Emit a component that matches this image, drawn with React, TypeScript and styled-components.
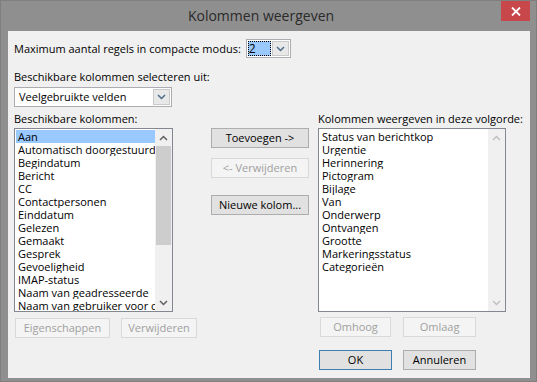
import React from 'react';
import styled, { createGlobalStyle } from 'styled-components';

const Global = createGlobalStyle`
  html, body { margin: 0; padding: 0; background: #8e8e8e; }
  body { font-family: "Open Sans", "Noto Sans", sans-serif; }
`;

const Window = styled.div`
  width: 537px;
  height: 382px;
  box-sizing: border-box;
  background: #8f8f8f;
  border: 1px solid #7f7f7f;
  display: flex;
  flex-direction: column;
  padding: 0 6px 3px 7px;
`;

const TitleBar = styled.div`
  height: 30px;
  display: flex;
  flex-shrink: 0;
`;

const Title = styled.div`
  flex: 1;
  text-align: center;
  padding-left: 13px;
  font-size: 14px;
  line-height: 30px;
  color: #2a2a2a;
`;

const CloseButton = styled.div`
  width: 29px;
  height: 20px;
  background: #c7474b;
  display: flex;
  align-items: center;
  justify-content: center;
`;

const Client = styled.div`
  flex: 1;
  background: #f0f0f0;
  display: flex;
  flex-direction: column;
  padding: 0 6px;
  font-size: 11px;
  color: #000;
`;

const TopRow = styled.div`
  margin-top: 8px;
  height: 19px;
  display: flex;
  align-items: center;
  gap: 5px;
`;

const Label = styled.div<{ $mt?: number }>`
  line-height: 15px;
  white-space: nowrap;
  margin-top: ${(p) => p.$mt ?? 0}px;
`;

const Combo = styled.div<{ $w: number; $h: number; $mt?: number }>`
  width: ${(p) => p.$w}px;
  height: ${(p) => p.$h}px;
  margin-top: ${(p) => p.$mt ?? 0}px;
  box-sizing: border-box;
  border: 1px solid #abadb3;
  background: #fff;
  display: flex;
  padding: 1px;
  flex-shrink: 0;
`;

const ComboText = styled.div<{ $selected?: boolean }>`
  flex: 1;
  line-height: 15px;
  padding-left: ${(p) => (p.$selected ? 1 : 3)}px;
  background: ${(p) => (p.$selected ? '#99c9ff' : 'transparent')};
  outline: ${(p) => (p.$selected ? '1px dotted #000' : 'none')};
  outline-offset: -1px;
  margin-right: 1px;
  font-size: ${(p) => (p.$selected ? 12 : 11)}px;
`;

const ComboButton = styled.div`
  width: 17px;
  box-sizing: border-box;
  border: 1px solid #c9c9c9;
  background: #e8e8e8;
  display: flex;
  align-items: center;
  justify-content: center;
`;

const Columns = styled.div`
  margin-top: 4px;
  display: grid;
  grid-template-columns: 159px 98px 159px;
  column-gap: 38px;
  align-items: start;
`;

const LeftCol = styled.div`
  display: flex;
  flex-direction: column;
`;

const MidCol = styled.div`
  display: flex;
  flex-direction: column;
  padding-top: 17px;
`;

const RightCol = styled.div`
  display: flex;
  flex-direction: column;
  margin-left: -29px;
`;

const ListBox = styled.div`
  margin-top: 2px;
  height: 184px;
  box-sizing: border-box;
  border: 1px solid #828790;
  background: #fff;
  display: flex;
  overflow: hidden;
`;

const Items = styled.div`
  flex: 1;
  min-width: 0;
  padding: 1px 0 0 1px;
`;

const Item = styled.div<{ $selected?: boolean }>`
  height: 13px;
  line-height: 13px;
  padding-left: 2px;
  white-space: nowrap;
  overflow: hidden;
  background: ${(p) => (p.$selected ? '#99c9ff' : 'transparent')};
`;

const ScrollBar = styled.div`
  width: 17px;
  display: flex;
  flex-direction: column;
  background: #f0f0f0;
`;

const ScrollArrow = styled.div`
  height: 17px;
  display: flex;
  align-items: center;
  justify-content: center;
`;

const ScrollTrack = styled.div`
  flex: 1;
  display: flex;
  flex-direction: column;
`;

const Thumb = styled.div`
  height: 99px;
  margin: 0 1px;
  background: #cdcdcd;
`;

const Button = styled.div<{ $w: number; $disabled?: boolean; $default?: boolean; $mt?: number }>`
  width: ${(p) => p.$w}px;
  height: 20px;
  margin-top: ${(p) => p.$mt ?? 0}px;
  box-sizing: border-box;
  border: 1px solid ${(p) => (p.$default ? '#3c7fb1' : p.$disabled ? '#d9d9d9' : '#adadad')};
  background: ${(p) => (p.$disabled ? '#f4f4f4' : '#e1e1e1')};
  color: ${(p) => (p.$disabled ? '#a0a0a0' : '#000')};
  display: flex;
  align-items: center;
  justify-content: center;
  white-space: nowrap;
  line-height: 18px;
  flex-shrink: 0;
`;

const ButtonRow = styled.div<{ $mt: number; $ml: number; $gap: number }>`
  display: flex;
  gap: ${(p) => p.$gap}px;
  margin-top: ${(p) => p.$mt}px;
  margin-left: ${(p) => p.$ml}px;
`;

const Chevron = ({ up, color = '#606060' }: { up?: boolean; color?: string }) => (
  <svg width="9" height="6" viewBox="0 0 9 6">
    <path
      d={up ? 'M1 5 L4.5 1.5 L8 5' : 'M1 1 L4.5 4.5 L8 1'}
      fill="none"
      stroke={color}
      strokeWidth="1.5"
    />
  </svg>
);

const leftItems = [
  'Aan',
  'Automatisch doorgestuurd',
  'Begindatum',
  'Bericht',
  'CC',
  'Contactpersonen',
  'Einddatum',
  'Gelezen',
  'Gemaakt',
  'Gesprek',
  'Gevoeligheid',
  'IMAP-status',
  'Naam van geadresseerde',
  'Naam van gebruiker voor contactpersoon',
];

const rightItems = [
  'Status van berichtkop',
  'Urgentie',
  'Herinnering',
  'Pictogram',
  'Bijlage',
  'Van',
  'Onderwerp',
  'Ontvangen',
  'Grootte',
  'Markeringsstatus',
  'Categorieën',
];

export default function App() {
  return (
    <>
      <Global />
      <Window>
        <TitleBar>
          <Title>Kolommen weergeven</Title>
          <CloseButton>
            <svg width="10" height="9" viewBox="0 0 10 9">
              <path d="M1 0.5 L9 8.5 M9 0.5 L1 8.5" stroke="#fff" strokeWidth="1.8" />
            </svg>
          </CloseButton>
        </TitleBar>
        <Client>
          <TopRow>
            <Label>Maximum aantal regels in compacte modus:</Label>
            <Combo $w={45} $h={19}>
              <ComboText $selected>2</ComboText>
              <ComboButton>
                <Chevron color="#4d6a8a" />
              </ComboButton>
            </Combo>
          </TopRow>
          <Label $mt={11}>Beschikbare kolommen selecteren uit:</Label>
          <Combo $w={158} $h={20} $mt={3}>
            <ComboText>Veelgebruikte velden</ComboText>
            <ComboButton>
              <Chevron color="#4d6a8a" />
            </ComboButton>
          </Combo>
          <Columns>
            <LeftCol>
              <Label>Beschikbare kolommen:</Label>
              <ListBox>
                <Items>
                  {leftItems.map((t, i) => (
                    <Item key={t} $selected={i === 0}>
                      {t}
                    </Item>
                  ))}
                </Items>
                <ScrollBar>
                  <ScrollArrow>
                    <Chevron up />
                  </ScrollArrow>
                  <ScrollTrack>
                    <Thumb />
                  </ScrollTrack>
                  <ScrollArrow>
                    <Chevron />
                  </ScrollArrow>
                </ScrollBar>
              </ListBox>
              <ButtonRow $mt={6} $ml={1} $gap={11}>
                <Button $w={95} $disabled>Eigenschappen</Button>
                <Button $w={76} $disabled>Verwijderen</Button>
              </ButtonRow>
            </LeftCol>
            <MidCol>
              <Button $w={98}>Toevoegen -&gt;</Button>
              <Button $w={98} $mt={10} $disabled>&lt;- Verwijderen</Button>
              <Button $w={98} $mt={17}>Nieuwe kolom...</Button>
            </MidCol>
            <RightCol>
              <Label>Kolommen weergeven in deze volgorde:</Label>
              <ListBox>
                <Items>
                  {rightItems.map((t) => (
                    <Item key={t}>{t}</Item>
                  ))}
                </Items>
                <ScrollBar>
                  <ScrollArrow>
                    <Chevron up color="#c0c0c0" />
                  </ScrollArrow>
                  <ScrollTrack />
                  <ScrollArrow>
                    <Chevron color="#c0c0c0" />
                  </ScrollArrow>
                </ScrollBar>
              </ListBox>
              <ButtonRow $mt={5} $ml={2} $gap={12}>
                <Button $w={71} $disabled>Omhoog</Button>
                <Button $w={73} $disabled>Omlaag</Button>
              </ButtonRow>
              <ButtonRow $mt={13} $ml={1} $gap={11}>
                <Button $w={73} $default>OK</Button>
                <Button $w={73}>Annuleren</Button>
              </ButtonRow>
            </RightCol>
          </Columns>
        </Client>
      </Window>
    </>
  );
}
